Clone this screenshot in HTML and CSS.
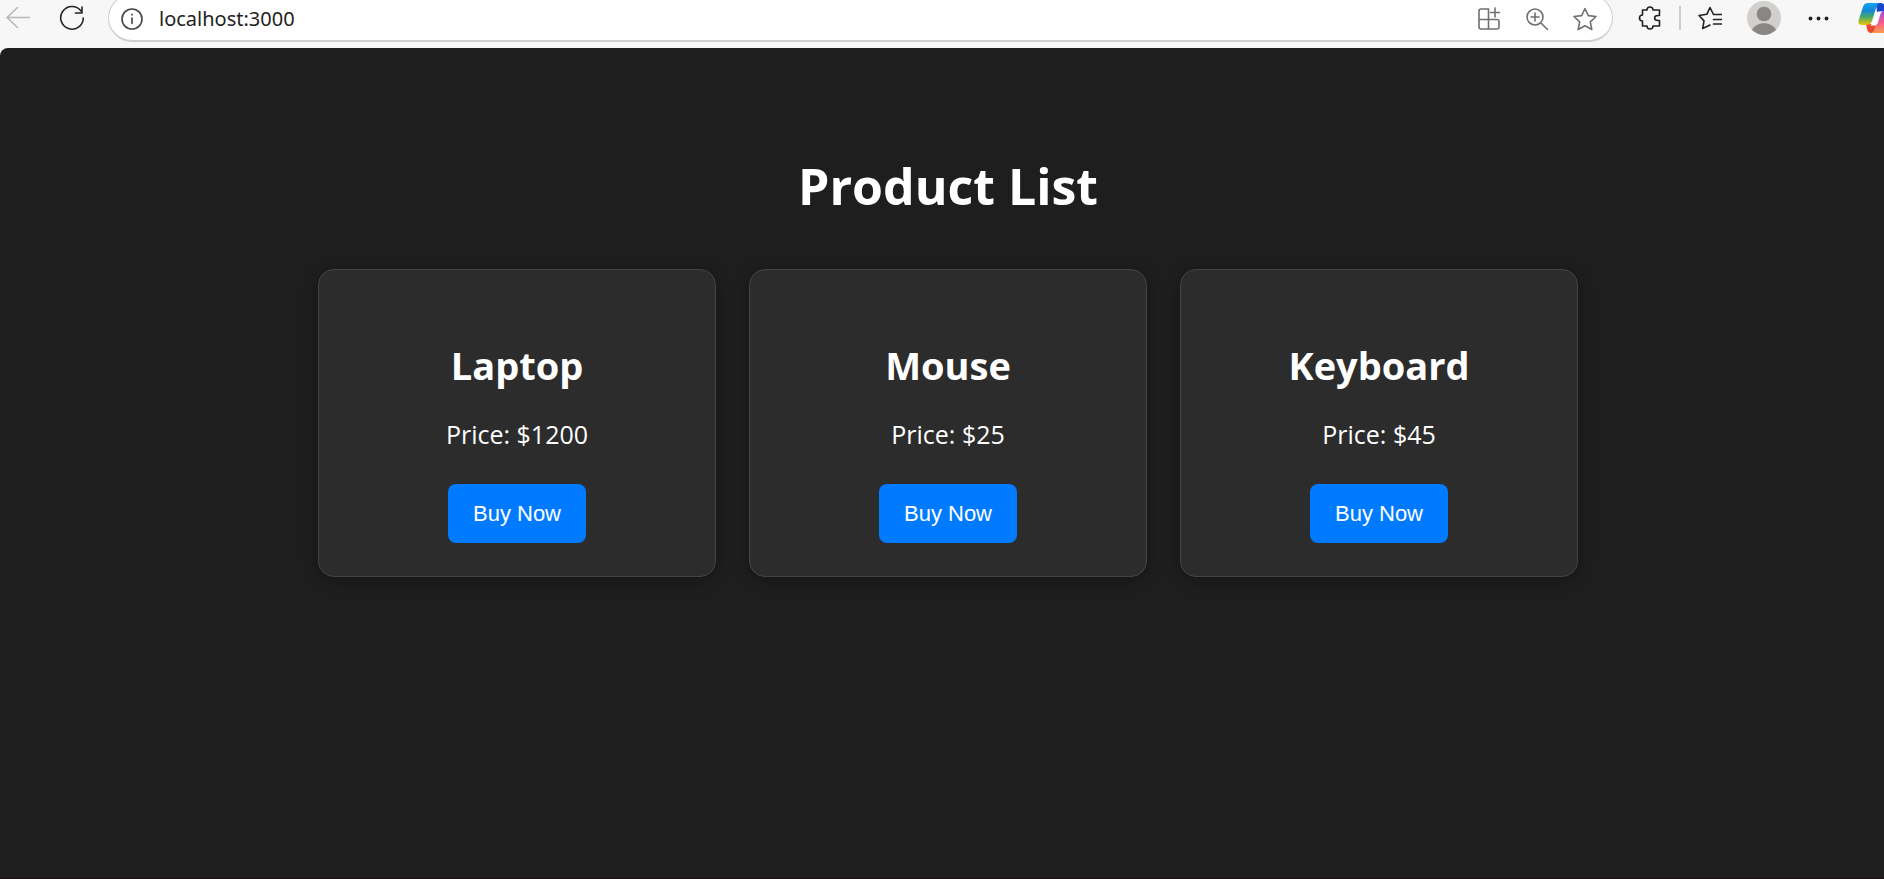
FILE: index.html
```
<!DOCTYPE html>
<html lang="en">
<head>
<meta charset="utf-8">
<title>Product List</title>
<link rel="stylesheet" href="styles.css">
</head>
<body>
<header class="toolbar">
  <button class="tool back" aria-label="Back"><svg width="36" height="36" viewBox="0 0 36 36"><path d="M29.500 17.500H7M17.500 7.500 7 17.500l10.500 10"/></svg></button>
  <button class="tool reload" aria-label="Refresh"><svg width="36" height="36" viewBox="0 0 36 36"><path d="M27 11A11.300 11.300 0 1 0 29.300 18M28 7v6h-6.500"/></svg></button>
  <form class="address">
    <button type="button" class="tool info" aria-label="Site information"><svg width="24" height="24" viewBox="0 0 24 24"><circle cx="12" cy="12" r="10"/><path d="M12 11v5.500M12 7.300v.7"/></svg></button>
    <input class="url" type="text" aria-label="Address" value="localhost:3000">
    <button type="button" class="tool soft" aria-label="Apps"><svg width="24" height="24" viewBox="0 0 24 24"><path d="M11.500 2H4a2 2 0 0 0-2 2v16a2 2 0 0 0 2 2h16a2 2 0 0 0 2-2v-5.500a2 2 0 0 0-2-2H2M11.500 2v20M18 1v9M13.500 5.500h9"/></svg></button>
    <button type="button" class="tool soft" aria-label="Zoom"><svg width="24" height="24" viewBox="0 0 24 24"><circle cx="10" cy="10" r="8"/><path d="m16 16 6.500 6.500M10 6v8M6 10h8"/></svg></button>
    <button type="button" class="tool soft" aria-label="Add to favorites"><svg width="24" height="24" viewBox="0 0 24 24"><path d="m12 1.500 3.300 7.100 7.700.9-5.700 5.300 1.500 7.700-6.800-3.800-6.800 3.800 1.500-7.700L1 9.500l7.700-.9z"/></svg></button>
  </form>
  <div class="actions">
    <button class="tool" aria-label="Extensions"><svg width="24" height="24" viewBox="0 0 24 24"><path d="M4.500 4H9c0-4 6-4 6 0h6.500v5.500h-1.500c-4.500 0-4.500 5 0 5h1.500V20H15c0 4-6 4-6 0H4.500v-5C.500 15 .500 9 4.500 9z"/></svg></button>
    <span class="divider"></span>
    <button class="tool" aria-label="Favorites"><svg width="24" height="24" viewBox="0 0 24 24"><path d="m15.500 8.500L12 1.500 8.800 8.300 1 9.500l5 5.400-1.300 7.600L12 19M15.500 8.500H24M15.500 13.500H24M15.500 18H24"/></svg></button>
    <button class="tool" aria-label="Profile"><svg class="avatar" width="34" height="34" viewBox="0 0 34 34"><circle cx="17" cy="17" r="17" fill="#d2d0cd"/><circle cx="17" cy="13" r="7.300" fill="#8a8683"/><path d="M5 29c4-9 20-9 24 0q-12 10-24 0" fill="#8a8683"/></svg></button>
    <button class="tool" aria-label="Settings and more"><svg class="dots" width="24" height="24" viewBox="0 0 24 24"><circle cx="4.500" cy="12.500" r="1.900"/><circle cx="12.500" cy="12.500" r="1.900"/><circle cx="20.500" cy="12.500" r="1.900"/></svg></button>
  </div>
  <button class="tool copilot" aria-label="Copilot"><svg width="36" height="32" viewBox="0 0 36 32">
    <defs>
      <linearGradient id="cool" x1="0" y1="0" x2="0" y2="1"><stop offset="0" stop-color="#12a5ee"/><stop offset=".35" stop-color="#1685d8"/><stop offset=".65" stop-color="#4dac65"/><stop offset="1" stop-color="#f4c500"/></linearGradient>
      <linearGradient id="warm" x1="0" y1="0" x2="0" y2="1"><stop offset="0" stop-color="#a64be8"/><stop offset=".5" stop-color="#f05a92"/><stop offset="1" stop-color="#ff9b50"/></linearGradient>
    </defs>
    <path d="M8 22h10l-2 9h-3q-3 0-4-4z" fill="#e9472f"/>
    <path d="M18 1h5q3 0 4 4l1 5h-9z" fill="#1746cf"/>
    <path d="M23 9h8q5 0 4 6l-4 12q-2 4-6 4H13q3-1 4-5l4-14q1-3 2-3z" fill="url(#warm)"/>
    <path d="M10 1h11q-2 1-3 5l-4 13q-1 4-6 4H4q-5 0-3-6L5 5q1-4 5-4z" fill="url(#cool)"/>
    <path d="M21 9.500h4q-2 0-3 4l-2 7q-1 3-4 3h-4q2-1 3-4l2-6q1-4 4-4z" fill="#fff"/>
  </svg></button>
</header>
<main class="page">
  <h1 class="title">Product List</h1>
  <div class="cards">
    <article class="card"><h2 class="name">Laptop</h2><p class="price">Price: $1200</p><button class="buy">Buy Now</button></article>
    <article class="card"><h2 class="name">Mouse</h2><p class="price">Price: $25</p><button class="buy">Buy Now</button></article>
    <article class="card"><h2 class="name">Keyboard</h2><p class="price">Price: $45</p><button class="buy">Buy Now</button></article>
  </div>
</main>
</body>
</html>
```
FILE: styles.css
```
* { box-sizing: border-box; }
body {
  margin: 0;
  min-height: 100vh;
  display: flex;
  flex-direction: column;
  background: #f7f7f7;
  color: #fff;
  font-family: "Segoe UI", "Open Sans", "Noto Sans", sans-serif;
  overflow-x: hidden;
}
button { border: 0; cursor: pointer; }
.toolbar {
  display: flex;
  align-items: flex-start;
  height: 48px;
  overflow: hidden;
}
.tool {
  display: flex;
  flex: none;
  padding: 0;
  background: none;
  color: #222;
}
.tool svg {
  flex: none;
  fill: none;
  stroke: currentColor;
  stroke-width: 1.6;
  stroke-linejoin: round;
  stroke-linecap: round;
}
.tool .avatar, .copilot svg { stroke: none; }
.tool .dots { fill: currentColor; stroke: none; }
.back { color: #b8b8b8; }
.reload { margin-left: 18px; }
.soft { color: #707070; }
.address {
  flex: 1;
  display: flex;
  align-items: center;
  gap: 24px;
  height: 48px;
  margin: -6px 0 0 18px;
  padding: 6px 15px 4px 11px;
  background: #fff;
  border: 1px solid #cfcfcf;
  border-bottom-width: 2px;
  border-radius: 24px;
}
.info { margin-right: -12px; color: #444; }
.url {
  flex: 1;
  min-width: 0;
  height: 32px;
  padding: 0 0 0 3px;
  border: 0;
  outline: 0;
  background: none;
  color: #222;
  font-family: "Segoe UI", "Noto Sans", sans-serif;
  font-size: 20px;
}
.actions {
  display: flex;
  align-items: center;
  gap: 25px;
  height: 36px;
  padding: 0 28px 0 25px;
}
.divider {
  width: 2px;
  height: 24px;
  margin: 0 -8px;
  background: #ccc;
}
.copilot { width: 26px; margin-top: 2px; overflow: hidden; }
.page {
  flex: 1;
  padding: 102px 0 40px 12px;
  background: #1e1e1e;
  border-bottom: 1px solid #1a1118;
  border-radius: 8px 0 0 0;
}
.title {
  margin: 0 0 46px;
  font-size: 50px;
  line-height: 73px;
  text-align: center;
}
.cards {
  display: flex;
  flex-wrap: wrap;
  justify-content: center;
  gap: 33px;
}
.card {
  width: 398px;
  padding: 65px 33px 33px;
  background: #2c2c2c;
  border: 1px solid #444;
  border-radius: 16px;
  box-shadow: 0 3px 16px rgba(0, 0, 0, .3);
  text-align: center;
}
.name { margin: 0; font-size: 38px; line-height: 60px; }
.price { margin: 21px 0 32px; font-size: 25px; line-height: 36px; }
.buy {
  padding: 16px 25px;
  background: #007bff;
  border-radius: 8px;
  color: #fff;
  font: 22px/27px "Liberation Sans", Arial, sans-serif;
}
```
